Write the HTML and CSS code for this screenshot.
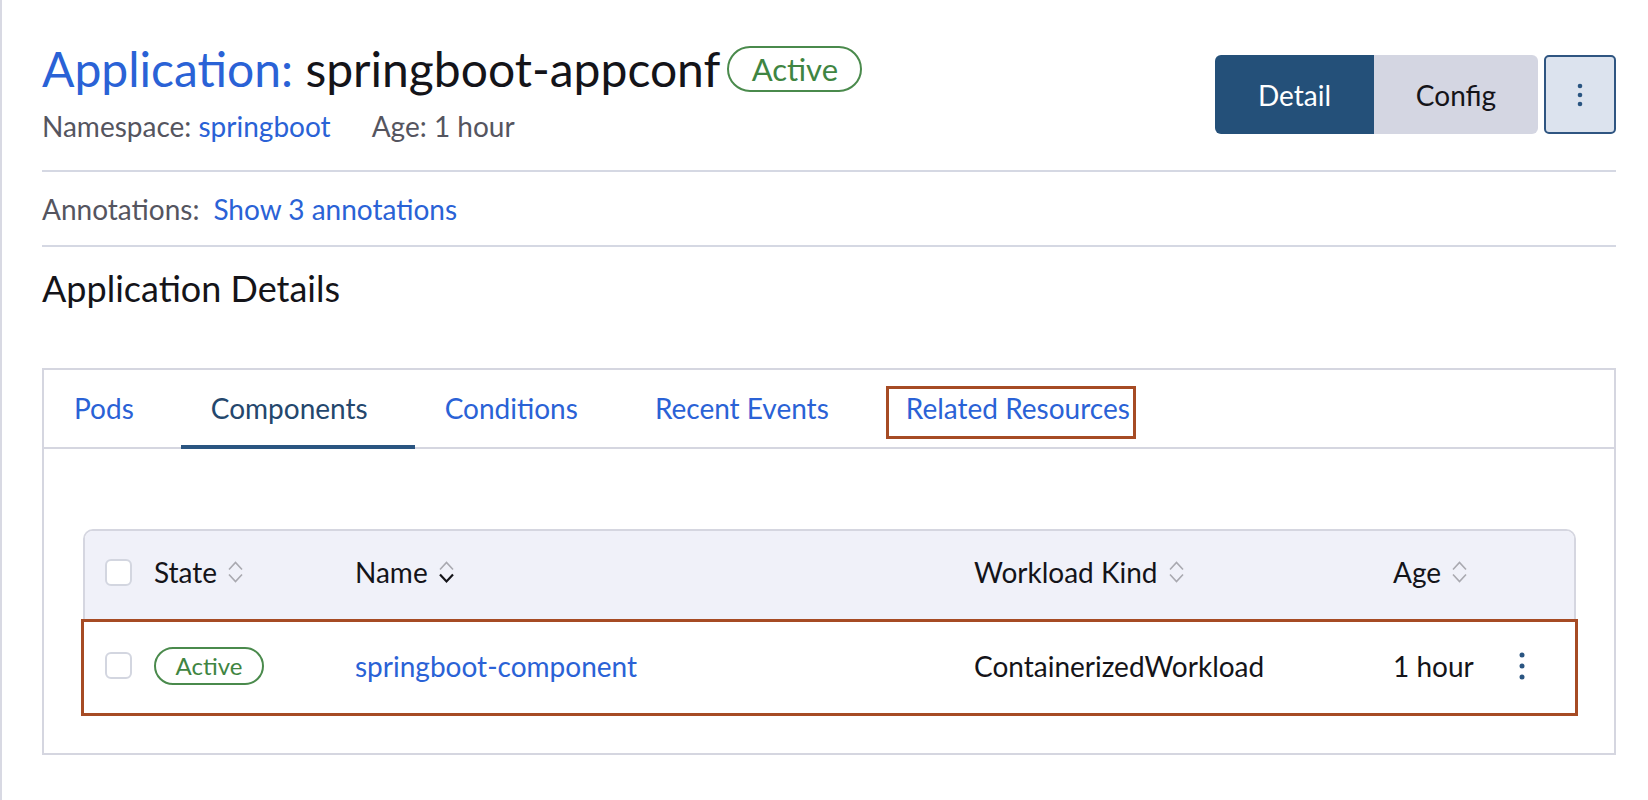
FILE: index.html
```html
<!DOCTYPE html>
<html>
<head>
<meta charset="utf-8">
<link rel="stylesheet" href="styles.css">
</head>
<body>
<div class="page">
  <header class="header">
    <div class="title-block">
      <div class="title-row">
        <h1 class="title"><span class="title-type">Application:</span> springboot-appconf</h1>
        <span class="badge badge-lg">Active</span>
      </div>
      <div class="meta">
        <span>Namespace: <a class="link">springboot</a></span>
        <span class="meta-age">Age: 1 hour</span>
      </div>
    </div>
    <div class="actions">
      <div class="toggle">
        <button class="toggle-btn active">Detail</button>
        <button class="toggle-btn">Config</button>
      </div>
      <button class="kebab-btn" aria-label="More">
        <svg width="6" height="24" viewBox="0 0 6 24"><circle cx="3" cy="3" r="2.3" fill="#2a5581"/><circle cx="3" cy="12" r="2.3" fill="#2a5581"/><circle cx="3" cy="21" r="2.3" fill="#2a5581"/></svg>
      </button>
    </div>
  </header>
  <hr class="rule">
  <div class="annotations">
    <span class="label">Annotations:</span>
    <a class="link">Show 3 annotations</a>
  </div>
  <hr class="rule">
  <h2 class="section-title">Application Details</h2>

  <div class="tabbox">
    <ul class="tabs">
      <li class="tab"><a class="tab-link">Pods</a></li>
      <li class="tab selected"><a class="tab-link">Components</a></li>
      <li class="tab"><a class="tab-link">Conditions</a></li>
      <li class="tab"><a class="tab-link">Recent Events</a></li>
      <li class="tab"><a class="tab-link highlight">Related Resources</a></li>
    </ul>
    <div class="tab-body">
      <div class="table">
        <div class="thead">
          <div class="cell c-check"><span class="checkbox"></span></div>
          <div class="cell c-state">State <span class="sort"><svg width="15" height="26" viewBox="0 0 15 26"><path d="M1 10.5 L7.5 3.5 L14 10.5" fill="none" stroke="#a9a9b0" stroke-width="1.6"/><path d="M1 15.5 L7.5 22.5 L14 15.5" fill="none" stroke="#a9a9b0" stroke-width="1.6"/></svg></span></div>
          <div class="cell c-name">Name <span class="sort"><svg width="15" height="26" viewBox="0 0 15 26"><path d="M1 10.5 L7.5 3.5 L14 10.5" fill="none" stroke="#a9a9b0" stroke-width="1.6"/><path d="M1 15.5 L7.5 22.5 L14 15.5" fill="none" stroke="#141419" stroke-width="2.2"/></svg></span></div>
          <div class="cell c-kind">Workload Kind <span class="sort"><svg width="15" height="26" viewBox="0 0 15 26"><path d="M1 10.5 L7.5 3.5 L14 10.5" fill="none" stroke="#a9a9b0" stroke-width="1.6"/><path d="M1 15.5 L7.5 22.5 L14 15.5" fill="none" stroke="#a9a9b0" stroke-width="1.6"/></svg></span></div>
          <div class="cell c-age">Age <span class="sort"><svg width="15" height="26" viewBox="0 0 15 26"><path d="M1 10.5 L7.5 3.5 L14 10.5" fill="none" stroke="#a9a9b0" stroke-width="1.6"/><path d="M1 15.5 L7.5 22.5 L14 15.5" fill="none" stroke="#a9a9b0" stroke-width="1.6"/></svg></span></div>
          <div class="cell c-menu"></div>
        </div>
        <div class="trow">
          <div class="cell c-check"><span class="checkbox"></span></div>
          <div class="cell c-state"><span class="badge badge-sm">Active</span></div>
          <div class="cell c-name"><a class="link">springboot-component</a></div>
          <div class="cell c-kind">ContainerizedWorkload</div>
          <div class="cell c-age">1 hour</div>
          <div class="cell c-menu">
            <svg width="6" height="28" viewBox="0 0 6 28"><circle cx="3" cy="3" r="2.5" fill="#2a5581"/><circle cx="3" cy="14" r="2.5" fill="#2a5581"/><circle cx="3" cy="25" r="2.5" fill="#2a5581"/></svg>
          </div>
        </div>
      </div>
    </div>
  </div>
</div>
</body>
</html>
```

FILE: styles.css
```css
* { box-sizing: border-box; }

html, body {
  margin: 0;
  padding: 0;
  background: #ffffff;
}

body {
  font-family: Lato, "Open Sans", "Liberation Sans", sans-serif;
  color: #141419;
  height: 800px;
  overflow: hidden;
}

.page {
  border-left: 2px solid #d8d9e3;
  min-height: 800px;
  padding: 0 32px 0 40px;
}

.link {
  color: #2a62d6;
  text-decoration: none;
}

/* header */
.header {
  display: flex;
  justify-content: space-between;
  align-items: flex-start;
}

.title-block {
  padding-top: 42px;
}

.title-row {
  display: flex;
  align-items: center;
  gap: 7px;
}

.title {
  margin: 0;
  font-size: 48px;
  line-height: 54px;
  font-weight: 400;
  color: #141419;
}

.title-type {
  color: #2a62d6;
}

.badge {
  display: inline-flex;
  align-items: center;
  justify-content: center;
  border: 2px solid #4a8a4c;
  color: #3f8542;
  border-radius: 999px;
}

.badge-lg {
  width: 135px;
  height: 46px;
  font-size: 31px;
}

.badge-sm {
  width: 110px;
  height: 38px;
  font-size: 24px;
}

.meta {
  margin-top: 15px;
  font-size: 28px;
  line-height: 30px;
  color: #55555f;
  display: flex;
  gap: 41px;
}

.actions {
  display: flex;
  gap: 6px;
  padding-top: 55px;
}

.toggle {
  display: flex;
  border-radius: 6px;
  overflow: hidden;
}

.toggle-btn {
  font-family: inherit;
  font-size: 28px;
  border: 0;
  height: 79px;
  padding: 0;
  background: #d4d6e2;
  color: #141419;
  width: 164px;
}

.toggle-btn.active {
  background: #245079;
  color: #ffffff;
  width: 159px;
}

.kebab-btn {
  width: 72px;
  height: 79px;
  background: #dce3ee;
  border: 2px solid #2f5581;
  border-radius: 5px;
  display: flex;
  align-items: center;
  justify-content: center;
  padding: 0;
}

.rule {
  border: 0;
  border-top: 2px solid #d5d8e3;
  margin: 0;
}

.header + .rule {
  margin-top: 29px;
}

.annotations {
  font-size: 28px;
  line-height: 30px;
  padding: 22px 0 21px;
  display: flex;
  gap: 14px;
}

.annotations .label {
  color: #55555f;
}

.section-title {
  margin: 21px 0 0;
  font-size: 36px;
  line-height: 40px;
  font-weight: 400;
  color: #141419;
}

/* tabs box */
.tabbox {
  margin-top: 60px;
  border: 2px solid #d5d6e0;
}

.tabs {
  list-style: none;
  margin: 0;
  padding: 0;
  display: flex;
  height: 79px;
  border-bottom: 2px solid #d5d6e0;
}

.tab {
  display: flex;
  align-items: center;
  padding: 0 47px 0 30px;
  border-bottom: 4px solid transparent;
  margin-bottom: -2px;
}

.tab.selected {
  border-bottom-color: #2a5581;
}

.tab-link {
  font-size: 28px;
  line-height: 34px;
  color: #2a62d6;
}

.tab.selected .tab-link {
  color: #24476d;
}

.tab-link.highlight {
  display: inline-block;
  border: 3px solid #a64b24;
  padding: 2px 3px 11px 17px;
  margin: 10px 0 0 -20px;
}

.tab-body {
  padding: 80px 38px 39px 39px;
}

/* table */
.table {
  border: 2px solid #d5d6e0;
  border-radius: 10px;
  font-size: 28px;
}

.thead, .trow {
  display: grid;
  grid-template-columns: 49px 201px 619px 419px 116px 1fr;
  align-items: center;
}

.thead {
  height: 88px;
  background: #f0f1f9;
  border-radius: 8px 8px 0 0;
  padding: 0 0 6px 20px;
}

.trow {
  height: 97px;
  border: 3px solid #a64b24;
  margin: 0 -4px -4px -4px;
  padding: 0 0 4px 21px;
  background: #fff;
}

.cell {
  display: flex;
  align-items: center;
  white-space: nowrap;
}

.sort {
  display: inline-flex;
  margin-left: 11px;
}

.checkbox {
  display: inline-block;
  width: 27px;
  height: 27px;
  border: 2px solid #d3d6e0;
  border-radius: 6px;
  background: #fff;
}

.c-menu {
  justify-content: flex-start;
  padding-left: 10px;
}
```
